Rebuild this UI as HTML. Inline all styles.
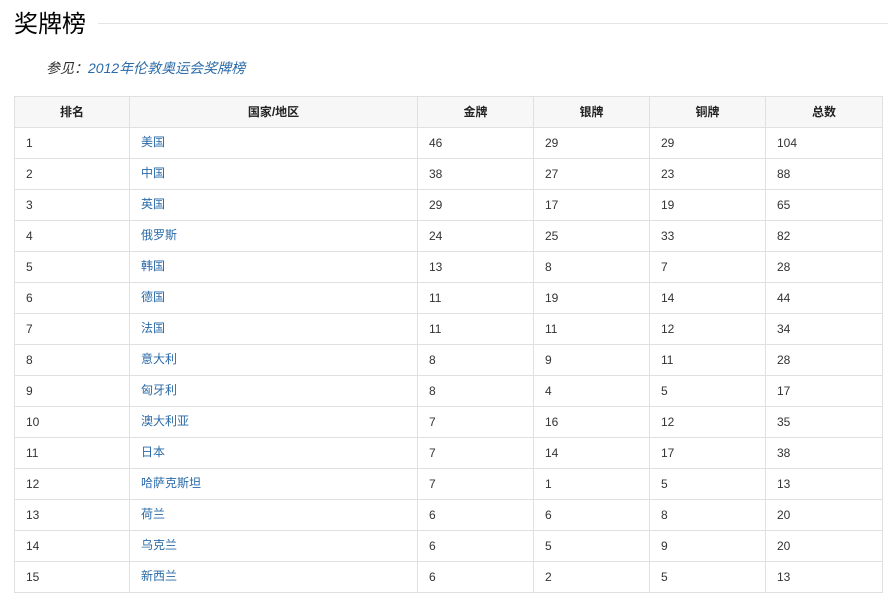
<!DOCTYPE html>
<html><head><meta charset="utf-8"><style>
body{margin:0;background:#fff;font-family:"Liberation Sans","Noto Sans CJK SC",sans-serif;width:888px;height:569px;overflow:hidden;position:relative}
h2{position:absolute;left:14px;top:9px;margin:0;font-size:24px;font-weight:normal;color:#000;line-height:32px}
.line{position:absolute;left:98px;right:0;top:23px;border-top:1px solid #e5e5e5}
.see{position:absolute;left:46px;top:58px;font-size:14px;font-style:italic;color:#333}
.see a{color:#2a6aa8;text-decoration:none}
table{position:absolute;left:14px;top:96px;border-collapse:collapse;font-size:12px;color:#333;table-layout:fixed}
td,th{border:1px solid #e0e0e0;height:30px;padding:0 0 0 11px;text-align:left}
th{background:#f7f7f7;text-align:center;padding:0;font-weight:bold;color:#222}
th span{position:relative;top:-1px}
td a{color:#2a6aa8;text-decoration:none;position:relative;top:-2px}
</style></head><body>
<h2>奖牌榜</h2><div class="line"></div>
<div class="see">参见：<a>2012年伦敦奥运会奖牌榜</a></div>
<table>
<colgroup><col style="width:115px"><col style="width:288px"><col style="width:116px"><col style="width:116px"><col style="width:116px"><col style="width:117px"></colgroup>
<tr><th><span>排名</span></th><th><span>国家/地区</span></th><th><span>金牌</span></th><th><span>银牌</span></th><th><span>铜牌</span></th><th><span>总数</span></th></tr>
<tr><td>1</td><td><a>美国</a></td><td>46</td><td>29</td><td>29</td><td>104</td></tr>
<tr><td>2</td><td><a>中国</a></td><td>38</td><td>27</td><td>23</td><td>88</td></tr>
<tr><td>3</td><td><a>英国</a></td><td>29</td><td>17</td><td>19</td><td>65</td></tr>
<tr><td>4</td><td><a>俄罗斯</a></td><td>24</td><td>25</td><td>33</td><td>82</td></tr>
<tr><td>5</td><td><a>韩国</a></td><td>13</td><td>8</td><td>7</td><td>28</td></tr>
<tr><td>6</td><td><a>德国</a></td><td>11</td><td>19</td><td>14</td><td>44</td></tr>
<tr><td>7</td><td><a>法国</a></td><td>11</td><td>11</td><td>12</td><td>34</td></tr>
<tr><td>8</td><td><a>意大利</a></td><td>8</td><td>9</td><td>11</td><td>28</td></tr>
<tr><td>9</td><td><a>匈牙利</a></td><td>8</td><td>4</td><td>5</td><td>17</td></tr>
<tr><td>10</td><td><a>澳大利亚</a></td><td>7</td><td>16</td><td>12</td><td>35</td></tr>
<tr><td>11</td><td><a>日本</a></td><td>7</td><td>14</td><td>17</td><td>38</td></tr>
<tr><td>12</td><td><a>哈萨克斯坦</a></td><td>7</td><td>1</td><td>5</td><td>13</td></tr>
<tr><td>13</td><td><a>荷兰</a></td><td>6</td><td>6</td><td>8</td><td>20</td></tr>
<tr><td>14</td><td><a>乌克兰</a></td><td>6</td><td>5</td><td>9</td><td>20</td></tr>
<tr><td>15</td><td><a>新西兰</a></td><td>6</td><td>2</td><td>5</td><td>13</td></tr>
</table>
</body></html>
